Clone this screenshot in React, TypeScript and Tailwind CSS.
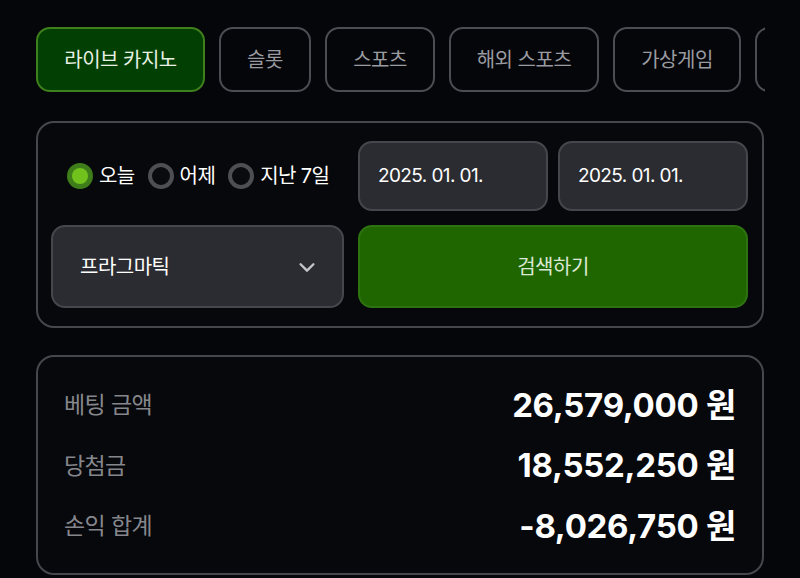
import React, { useState } from 'react';

const tabs = [
  { label: '라이브 카지노', w: 'w-[169px]' },
  { label: '슬롯', w: 'w-[92px]' },
  { label: '스포츠', w: 'w-[110px]' },
  { label: '해외 스포츠', w: 'w-[150px]' },
  { label: '가상게임', w: 'w-[128px]' },
];

const ranges = ['오늘', '어제', '지난 7일'];

const summary = [
  { label: '베팅 금액', value: '26,579,000' },
  { label: '당첨금', value: '18,552,250' },
  { label: '손익 합계', value: '-8,026,750' },
];

const Radio: React.FC<{ checked: boolean; label: string; onClick: () => void }> = ({ checked, label, onClick }) => (
  <button onClick={onClick} className="flex items-center gap-[6px]">
    {checked ? (
      <span className="flex h-[26px] w-[26px] items-center justify-center rounded-full bg-[#3f7d1a]">
        <span className="h-[16px] w-[16px] rounded-full bg-[#72c21e]" />
      </span>
    ) : (
      <span className="h-[26px] w-[26px] rounded-full border-[4px] border-[#4e4f53] bg-[#0a0b0f]" />
    )}
    <span className="text-[20px] text-white tracking-[-0.6px]">{label}</span>
  </button>
);

export default function App() {
  const [tab, setTab] = useState(0);
  const [range, setRange] = useState(0);

  return (
    <div
      className="min-h-[578px] w-[800px] overflow-hidden bg-[#05060a] px-[36px] pt-[27px]"
      style={{ fontFamily: 'Inter, "Noto Sans CJK KR", sans-serif' }}
    >
      <div className="flex w-[729px] gap-[14px] overflow-hidden">
        {tabs.map((t, i) => (
          <button
            key={t.label}
            onClick={() => setTab(i)}
            className={
              i === tab
                ? `${t.w} h-[65px] shrink-0 rounded-[14px] border-2 border-[#3f7f1c] bg-[#023f02] text-[20px] text-[#e8f0e4] tracking-[-0.5px]`
                : `${t.w} h-[65px] shrink-0 rounded-[14px] border-2 border-[#4c4d52] bg-transparent text-[20px] text-[#9a9ba0] tracking-[-0.5px]`
            }
          >
            {t.label}
          </button>
        ))}
        <div className="h-[65px] w-[120px] shrink-0 rounded-[14px] border-2 border-[#4c4d52]" />
      </div>

      <div className="mt-[29px] w-[728px] rounded-[18px] border-2 border-[#46474c] bg-[#07080c] px-[13px] py-[18px]">
        <div className="grid grid-cols-[293px_390px] gap-x-[14px] gap-y-[14px]">
          <div className="flex h-[70px] items-center gap-[13px] pl-[16px]">
            {ranges.map((r, i) => (
              <Radio key={r} label={r} checked={range === i} onClick={() => setRange(i)} />
            ))}
          </div>
          <div className="grid grid-cols-2 gap-[10px]">
            {[0, 1].map((i) => (
              <div
                key={i}
                className="flex h-[70px] items-center rounded-[14px] border-2 border-[#46474c] bg-[#2b2c31] px-[18px] text-[19px] text-white tracking-[-0.6px]"
              >
                2025. 01. 01.
              </div>
            ))}
          </div>
          <button className="flex h-[83px] items-center justify-between rounded-[14px] border-2 border-[#46474c] bg-[#2b2c31] pl-[27px] pr-[24px] text-[20px] text-white tracking-[-0.5px]">
            프라그마틱
            <svg width="22" height="22" viewBox="0 0 24 24" fill="none" stroke="#c4c5c9" strokeWidth="2.6" strokeLinecap="round" strokeLinejoin="round">
              <path d="M5 9l7 7 7-7" />
            </svg>
          </button>
          <button className="h-[83px] rounded-[14px] border-2 border-[#2d7410] bg-[#206600] text-[20px] text-[#dbe9d4] tracking-[-0.5px]">
            검색하기
          </button>
        </div>
      </div>

      <div className="mt-[27px] h-[220px] w-[728px] rounded-[18px] border-2 border-[#46474c] bg-[#07080c] px-[26px] pt-[18px]">
        {summary.map((s) => (
          <div key={s.label} className="flex h-[60.5px] items-center justify-between">
            <span className="text-[23px] text-[#86878c] tracking-[-0.6px]">{s.label}</span>
            <span className="text-[33px] font-bold text-white tracking-[-0.3px]">
              {s.value} 원
            </span>
          </div>
        ))}
      </div>
    </div>
  );
}
